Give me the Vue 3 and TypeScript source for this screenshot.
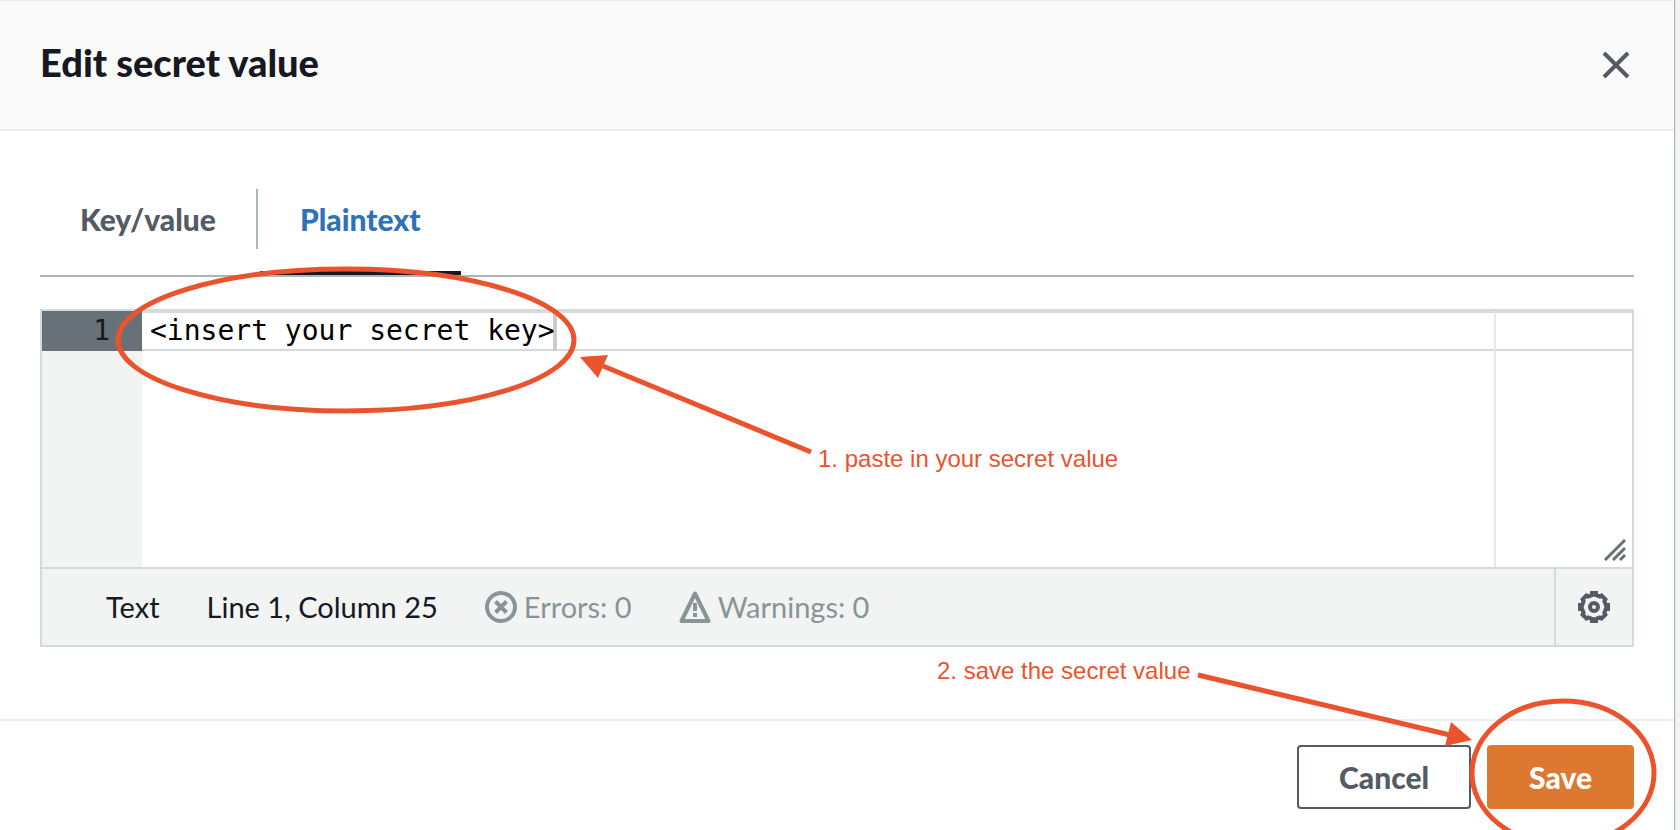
<script setup lang="ts">
import { ref, computed } from 'vue'

type TabId = 'keyvalue' | 'plaintext'

const tabs: { id: TabId; label: string }[] = [
  { id: 'keyvalue', label: 'Key/value' },
  { id: 'plaintext', label: 'Plaintext' },
]
const activeTab = ref<TabId>('plaintext')
const secret = ref('<insert your secret key>')
const column = computed(() => secret.value.length + 1)
</script>

<template>
  <div class="page">
    <section class="modal" role="dialog" aria-labelledby="modal-title">
      <header class="modal-header">
        <h1 id="modal-title">Edit secret value</h1>
        <button type="button" class="close" aria-label="Close">
          <svg viewBox="0 0 32 32" width="32" height="32">
            <path d="M4 4 L28 28 M28 4 L4 28" />
          </svg>
        </button>
      </header>

      <div class="modal-body">
        <div class="tabs" role="tablist">
          <button
            v-for="tab in tabs"
            :key="tab.id"
            type="button"
            role="tab"
            class="tab"
            :class="{ active: tab.id === activeTab }"
            :aria-selected="tab.id === activeTab"
            @click="activeTab = tab.id"
          >
            {{ tab.label }}
          </button>
        </div>

        <div class="editor">
          <div class="editor-main">
            <div class="gutter"><div class="line-number">1</div></div>
            <div class="code">
              <div class="active-line"></div>
              <div class="print-margin"></div>
              <div class="cursor"></div>
              <textarea v-model="secret" aria-label="Secret value" spellcheck="false" wrap="off"></textarea>
              <svg class="resize" viewBox="0 0 22 22" width="22" height="22" aria-hidden="true">
                <path d="M1 21 L21 1 M9 21 L21 9 M16 21 L21 16" />
              </svg>
            </div>
          </div>
          <div class="status">
            <div class="status-info">
              <span>Text</span>
              <span>Line 1, Column {{ column }}</span>
              <button type="button" class="count">
                <svg viewBox="0 0 32 32" width="32" height="32" aria-hidden="true">
                  <circle cx="16" cy="16" r="14" />
                  <path d="M10.500 10.500 L21.500 21.500 M21.500 10.500 L10.500 21.500" />
                </svg>
                Errors: 0
              </button>
              <button type="button" class="count">
                <svg viewBox="0 0 32 32" width="32" height="32" aria-hidden="true">
                  <path d="M16 2.500 L29.500 30 H2.500 Z" stroke-linejoin="round" />
                  <path d="M16 12 V20 M16 22 V26" />
                </svg>
                Warnings: 0
              </button>
            </div>
            <button type="button" class="settings" aria-label="Preferences">
              <svg viewBox="0 0 32 32" width="32" height="32">
                <path
                  d="M14 2 H18 V4.200 L21.800 5.600 L23.600 4.600 L27.400 8.400 L26.400 10.200 L27.800 14 H30 V18 H27.800 L26.400 21.800 L27.400 23.600 L23.600 27.400 L21.800 26.400 L18 27.800 V30 H14 V27.800 L10.200 26.400 L8.400 27.400 L4.600 23.600 L5.600 21.800 L4.200 18 H2 V14 H4.200 L5.600 10.200 L4.600 8.400 L8.400 4.600 L10.200 5.600 L14 4.200 Z"
                />
                <circle cx="16" cy="16" r="4" />
              </svg>
            </button>
          </div>
        </div>
      </div>

      <footer class="modal-footer">
        <button type="button" class="btn">Cancel</button>
        <button type="button" class="btn primary">Save</button>
      </footer>
    </section>

    <svg class="notes notes-left" viewBox="0 0 1180 480" width="1180" height="480">
      <ellipse cx="346" cy="340" rx="228" ry="71" />
      <path d="M603 366 L811 452" />
      <polygon points="580,357 608,355 598,378" />
      <text x="818" y="467">1. paste in your secret value</text>
    </svg>
    <svg class="notes notes-right" viewBox="920 640 760 220" width="760" height="220">
      <ellipse cx="1563" cy="773" rx="91" ry="72" />
      <path d="M1198 675 L1450 735" />
      <polygon points="1472,740 1451,722 1445,746" />
      <text x="937" y="679">2. save the secret value</text>
    </svg>
  </div>
</template>

<style>
body {
  margin: 0;
  background: #f2f3f3;
}
</style>

<style scoped>
.page {
  position: relative;
  box-sizing: border-box;
  min-height: 100vh;
  padding-right: 6px;
  overflow: hidden;
  display: flex;
  background: #f2f3f3;
  font-family: Lato, 'Open Sans', sans-serif;
  font-size: 29px;
  line-height: 36px;
  color: #16191f;
}
button {
  font: inherit;
  color: inherit;
  background: none;
  border: 0;
  padding: 0;
  cursor: pointer;
}
svg {
  display: block;
  fill: none;
  stroke: currentColor;
  stroke-width: 4;
}
.modal {
  flex: 1;
  min-width: 0;
  background: #fff;
  border-top: 1px solid #eaeded;
  box-shadow: 1px 0 1px #aab7b8;
}
.modal-header {
  display: flex;
  align-items: center;
  justify-content: space-between;
  height: 128px;
  padding: 0 42px 0 40px;
  background: #fafafa;
  border-bottom: 2px solid #eaeded;
}
h1 {
  margin: 0;
  padding-bottom: 6px;
  font-size: 38px;
  line-height: 44px;
  font-weight: 900;
}
.close {
  color: #545b64;
}
.modal-body {
  padding: 58px 40px 72px;
}
.tabs {
  display: flex;
  gap: 2px;
  padding-bottom: 26px;
  border-bottom: 2px solid #aab7b8;
}
.tab {
  position: relative;
  height: 60px;
  padding: 0 40px;
  font-size: 30px;
  font-weight: 900;
  color: #545b64;
}
.tab:not(:last-child) {
  border-right: 2px solid #aab7b8;
}
.tab.active {
  color: #2e73b8;
}
.tab.active::after {
  content: '';
  position: absolute;
  left: 0;
  right: 0;
  bottom: -26px;
  height: 4px;
  background: #16191f;
}
.editor {
  margin-top: 32px;
  border: 2px solid #d5dbdb;
}
.editor-main {
  display: flex;
  height: 256px;
  font-family: 'DejaVu Sans Mono', monospace;
  font-size: 28px;
  line-height: 40px;
}
.gutter {
  width: 100px;
  background: #f2f3f3;
}
.line-number {
  height: 40px;
  padding-right: 32px;
  text-align: right;
  background: #687078;
}
.code {
  position: relative;
  flex: 1;
  overflow: hidden;
}
.active-line {
  position: absolute;
  inset: 0 0 auto;
  box-sizing: border-box;
  height: 40px;
  border: solid #d5dbdb;
  border-width: 2px 0;
}
.print-margin {
  position: absolute;
  top: 0;
  bottom: 0;
  left: calc(3px + 80ch);
  width: 2px;
  background: #e8e8e8;
}
.cursor {
  position: absolute;
  top: 0;
  left: calc(6px + 24ch);
  width: 4px;
  height: 40px;
  background: #ccc;
}
textarea {
  position: relative;
  box-sizing: border-box;
  display: block;
  width: 100%;
  height: 100%;
  padding: 0 8px;
  border: 0;
  outline: 0;
  resize: none;
  overflow: hidden;
  background: transparent;
  color: #000;
  font: inherit;
}
.resize {
  position: absolute;
  right: 6px;
  bottom: 6px;
  color: #687078;
  stroke-width: 3;
}
.status {
  display: flex;
  height: 76px;
  border-top: 2px solid #d5dbdb;
  background: #f2f3f3;
}
.status-info {
  flex: 1;
  display: flex;
  align-items: center;
  gap: 47px;
  padding-left: 64px;
}
.count {
  display: flex;
  align-items: center;
  gap: 7px;
  color: #879596;
}
.settings {
  display: grid;
  place-items: center;
  width: 78px;
  border-left: 2px solid #d5dbdb;
  color: #545b64;
}
.modal-footer {
  display: flex;
  justify-content: flex-end;
  gap: 16px;
  padding: 24px 40px 20px;
  border-top: 2px solid #eaeded;
}
.btn {
  height: 64px;
  padding: 0 40px;
  border: 2px solid #545b64;
  border-radius: 4px;
  font-size: 30px;
  font-weight: 900;
  color: #545b64;
}
.btn.primary {
  border-color: #dd7831;
  background: #dd7831;
  color: #fff;
}
.notes {
  position: absolute;
  pointer-events: none;
  color: #eb532d;
  stroke-width: 5;
  font-family: 'Liberation Sans', Arial, sans-serif;
  font-size: 24px;
}
.notes text,
.notes polygon {
  fill: currentColor;
  stroke: none;
}
.notes-left {
  top: 0;
  left: 0;
}
.notes-right {
  top: 640px;
  right: 0;
}
</style>
